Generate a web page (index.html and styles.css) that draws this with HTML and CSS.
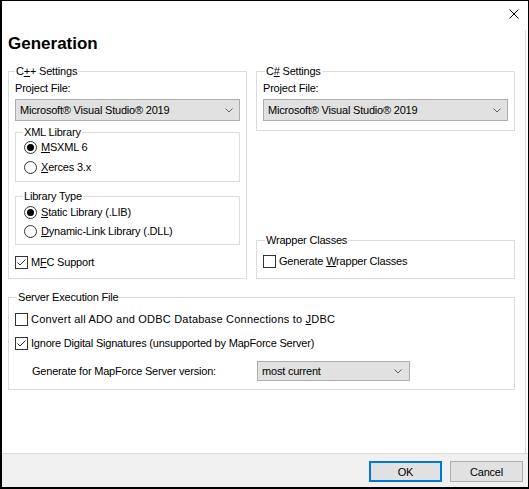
FILE: index.html
```html
<!DOCTYPE html>
<html lang="en">
<head>
<meta charset="utf-8">
<title>Generation</title>
<link rel="stylesheet" href="styles.css">
</head>
<body>
<div class="window">
  <button class="close" aria-label="Close">
    <svg width="10" height="10" viewBox="0 0 10 10"><path d="M0.5 0.5 L9.5 9.5 M9.5 0.5 L0.5 9.5" stroke="#000" stroke-width="1" fill="none"/></svg>
  </button>
  <div class="page">
    <div class="panel">
      <h1 class="title">Generation</h1>
      <div class="columns">
        <fieldset class="group cpp">
          <legend>C<u>+</u>+ Settings</legend>
          <div class="label">Project File:</div>
          <div class="select wide"><span>Microsoft® Visual Studio® 2019</span><svg class="chev" width="8" height="5" viewBox="0 0 8 5"><path d="M0.5 0.5 L4 4 L7.5 0.5" stroke="#606060" fill="none"/></svg></div>
          <fieldset class="group sub xml">
            <legend>XML Library</legend>
            <div class="opt radio-row"><span class="radio on"></span><span><u>M</u>SXML 6</span></div>
            <div class="opt radio-row"><span class="radio"></span><span><u>X</u>erces 3.x</span></div>
          </fieldset>
          <fieldset class="group sub lib">
            <legend>Library Type</legend>
            <div class="opt radio-row"><span class="radio on"></span><span><u>S</u>tatic Library (.LIB)</span></div>
            <div class="opt radio-row"><span class="radio"></span><span><u>D</u>ynamic-Link Library (.DLL)</span></div>
          </fieldset>
          <div class="opt mfc"><span class="box"><svg width="11" height="11" viewBox="0 0 11 11"><path d="M1.5 5.5 L4 8 L9.5 2.5" stroke="#333" fill="none"/></svg></span><span>M<u>F</u>C Support</span></div>
        </fieldset>
        <div class="rightcol">
          <fieldset class="group cs">
            <legend>C<u>#</u> Settings</legend>
            <div class="label">Project File:</div>
            <div class="select wide"><span>Microsoft® Visual Studio® 2019</span><svg class="chev" width="8" height="5" viewBox="0 0 8 5"><path d="M0.5 0.5 L4 4 L7.5 0.5" stroke="#606060" fill="none"/></svg></div>
          </fieldset>
          <fieldset class="group wrap">
            <legend>Wrapper Classes</legend>
            <div class="opt"><span class="box"></span><span>Generate <u>W</u>rapper Classes</span></div>
          </fieldset>
        </div>
      </div>
      <fieldset class="group server">
        <legend>Server Execution File</legend>
        <div class="opt"><span class="box"></span><span class="wide-text">Convert all ADO and ODBC Database Connections to <u>J</u>DBC</span></div>
        <div class="opt ignore"><span class="box"><svg width="11" height="11" viewBox="0 0 11 11"><path d="M1.5 5.5 L4 8 L9.5 2.5" stroke="#333" fill="none"/></svg></span><span>I<u>g</u>nore Digital Signatures (unsupported by MapForce Server)</span></div>
        <div class="version-row">
          <span class="version-label">Generate for MapForce Server version:</span>
          <div class="select combo"><span>most current</span><svg class="chev" width="8" height="5" viewBox="0 0 8 5"><path d="M0.5 0.5 L4 4 L7.5 0.5" stroke="#606060" fill="none"/></svg></div>
        </div>
      </fieldset>
    </div>
  </div>
  <div class="footer">
    <button class="btn default">OK</button>
    <button class="btn">Cancel</button>
  </div>
</div>
</body>
</html>
```

FILE: styles.css
```css
* { box-sizing: border-box; }
html, body { margin: 0; padding: 0; background: #fff; }
body {
  font-family: "Liberation Sans", Arial, sans-serif;
  font-size: 11px;
  line-height: 13px;
  color: #000;
  letter-spacing: -0.2px;
}
u { text-decoration: underline; text-underline-offset: 1px; }

.window {
  position: relative;
  width: 529px;
  height: 489px;
  border-style: solid;
  border-color: #000;
  border-width: 1px 1px 2px 2px;
  display: flex;
  flex-direction: column;
  background: #fff;
}

.close {
  position: absolute;
  top: 8px;
  right: 9px;
  width: 10px;
  height: 10px;
  padding: 0;
  margin: 0;
  border: 0;
  background: transparent;
  display: block;
}
.close svg { display: block; }

.page {
  flex: 1;
  padding: 29px 2px 0 6px;
  border-bottom: 1px solid #dadada;
  display: flex;
}
.panel {
  flex: 1;
  padding: 4px 10px 0 0;
  border-right: 1px solid #dadada;
}

.title {
  margin: 0 0 11px;
  font-size: 17px;
  line-height: 20px;
  font-weight: 700;
  letter-spacing: 0;
}

.columns {
  display: grid;
  grid-template-columns: 239px 259px;
  column-gap: 9px;
}

.group {
  margin: 0;
  min-width: 0;
  border: 1px solid #dcdcdc;
  padding: 0 6px;
}
.group legend {
  padding: 0 1px;
  line-height: 13px;
}

.cpp { padding: 4px 6px 7px; }
.cs { padding: 4px 6px 9px; }
.cs legend, .wrap legend, .server legend { margin-left: 2px; }

.label { height: 13px; }

.select {
  display: flex;
  align-items: center;
  justify-content: space-between;
  border: 1px solid #adadad;
  background: #e1e1e1;
}
.select.wide {
  margin-top: 4px;
  height: 22px;
  padding: 0 6px 0 4px;
}
.chev { display: block; }

.sub { padding: 0 8px; }
.sub legend { margin-left: -1px; }
.xml { margin-top: 5px; padding-bottom: 5px; }
.xml .radio-row + .radio-row { margin-top: 3px; }
.lib { margin-top: 8px; padding-top: 1px; padding-bottom: 4px; }
.lib .radio-row + .radio-row { margin-top: 2px; }

.opt {
  display: flex;
  align-items: center;
  height: 17px;
  gap: 3px;
}
.radio-row { gap: 4px; }

.radio {
  width: 13px;
  height: 13px;
  border: 1px solid #333;
  border-radius: 50%;
  background: #fff;
  display: flex;
  align-items: center;
  justify-content: center;
  flex: none;
}
.radio.on::after {
  content: "";
  width: 7px;
  height: 7px;
  border-radius: 50%;
  background: #000;
}

.box {
  width: 13px;
  height: 13px;
  border: 1px solid #333;
  background: #fff;
  flex: none;
  display: block;
}
.box svg { display: block; }

.mfc { margin-top: 9px; }

.rightcol {
  display: flex;
  flex-direction: column;
  justify-content: space-between;
}
.wrap { padding: 6px 6px 8px; }

.server {
  margin-top: 12px;
  padding: 7px 6px 8px;
}
.wide-text { letter-spacing: 0.2px; }
.server .ignore { margin-top: 7px; }
.version-row {
  display: flex;
  align-items: center;
  margin-top: 9px;
  padding-left: 17px;
  height: 20px;
}
.version-label { width: 225px; flex: none; }
.select.combo {
  width: 153px;
  height: 20px;
  padding: 0 7px 0 4px;
}

.footer {
  height: 33px;
  background: #f0f0f0;
  display: flex;
  justify-content: flex-end;
  align-items: flex-start;
  gap: 8px;
  padding: 7px 5px 0 0;
}
.btn {
  width: 73px;
  height: 21px;
  margin: 0;
  padding: 0;
  font-family: "Liberation Sans", Arial, sans-serif;
  font-size: 11px;
  letter-spacing: -0.2px;
  color: #000;
  background: #e1e1e1;
  border: 1px solid #adadad;
}
.btn.default { border: 2px solid #0078d7; }
```
